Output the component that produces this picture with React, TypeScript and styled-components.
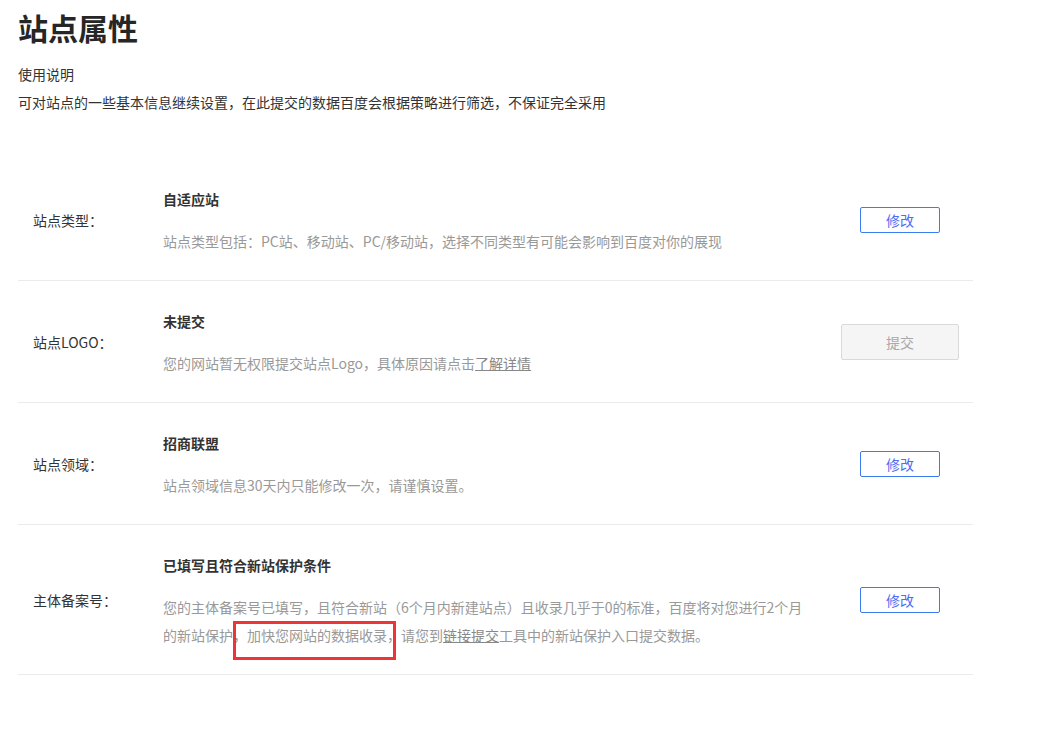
import React from 'react';
import styled, { createGlobalStyle } from 'styled-components';

const GlobalStyle = createGlobalStyle`
  html, body {
    margin: 0;
    padding: 0;
    background: #fff;
  }
  body {
    font-family: "Noto Sans CJK SC", "Liberation Sans", sans-serif;
    color: #333;
  }
`;

const Page = styled.div`
  padding: 7px 18px 40px;
  width: 955px;
`;

const Title = styled.h1`
  margin: 0;
  font-size: 30px;
  line-height: 40px;
  font-weight: bold;
  color: #262626;
`;

const Intro = styled.div`
  margin-top: 13px;
  font-size: 14px;
  line-height: 28px;
  color: #333;
`;

const List = styled.div`
  margin-top: 43px;
`;

const Row = styled.div`
  display: flex;
  align-items: center;
  border-bottom: 1px solid #ebebeb;
`;

const Label = styled.div`
  width: 145px;
  flex-shrink: 0;
  box-sizing: border-box;
  padding-left: 15px;
  font-size: 14px;
  color: #333;
`;

const Body = styled.div`
  flex: 1;
  padding: 28px 0 25px;
`;

const ItemTitle = styled.div`
  font-size: 14px;
  line-height: 24px;
  font-weight: bold;
  color: #333;
`;

const Desc = styled.div`
  margin-top: 16px;
  font-size: 14px;
  line-height: 28px;
  color: #999;
  max-width: 650px;
`;

const Link = styled.a`
  color: #888;
  text-decoration: underline;
  cursor: pointer;
`;

const Highlight = styled.span`
  position: relative;
  &::after {
    content: '';
    position: absolute;
    left: -14px;
    top: -4px;
    width: 163px;
    height: 39px;
    box-sizing: border-box;
    border: 3px solid #ee3535;
    pointer-events: none;
  }
`;

const Action = styled.div`
  width: 146px;
  flex-shrink: 0;
  display: flex;
  justify-content: center;
`;

const Button = styled.button<{ $disabled?: boolean }>`
  font-family: inherit;
  font-size: 14px;
  box-sizing: border-box;
  border-radius: 2px;
  cursor: ${(p) => (p.$disabled ? 'default' : 'pointer')};
  width: ${(p) => (p.$disabled ? '118px' : '80px')};
  height: ${(p) => (p.$disabled ? '36px' : '26px')};
  padding: 0;
  background: ${(p) => (p.$disabled ? '#f5f5f5' : '#fff')};
  border: 1px solid ${(p) => (p.$disabled ? '#d9d9d9' : '#3b7cf2')};
  color: ${(p) => (p.$disabled ? '#a8a8a8' : '#4e6ef2')};
`;

const App: React.FC = () => {
  return (
    <Page>
      <GlobalStyle />
      <Title>站点属性</Title>
      <Intro>
        <div>使用说明</div>
        <div>可对站点的一些基本信息继续设置，在此提交的数据百度会根据策略进行筛选，不保证完全采用</div>
      </Intro>
      <List>
        <Row>
          <Label>站点类型：</Label>
          <Body>
            <ItemTitle>自适应站</ItemTitle>
            <Desc>站点类型包括：PC站、移动站、PC/移动站，选择不同类型有可能会影响到百度对你的展现</Desc>
          </Body>
          <Action>
            <Button>修改</Button>
          </Action>
        </Row>
        <Row>
          <Label>站点LOGO：</Label>
          <Body>
            <ItemTitle>未提交</ItemTitle>
            <Desc>
              您的网站暂无权限提交站点Logo，具体原因请点击<Link>了解详情</Link>
            </Desc>
          </Body>
          <Action>
            <Button $disabled>提交</Button>
          </Action>
        </Row>
        <Row>
          <Label>站点领域：</Label>
          <Body>
            <ItemTitle>招商联盟</ItemTitle>
            <Desc>站点领域信息30天内只能修改一次，请谨慎设置。</Desc>
          </Body>
          <Action>
            <Button>修改</Button>
          </Action>
        </Row>
        <Row>
          <Label>主体备案号：</Label>
          <Body>
            <ItemTitle>已填写且符合新站保护条件</ItemTitle>
            <Desc>
              您的主体备案号已填写，且符合新站（6个月内新建站点）且收录几乎于0的标准，百度将对您进行2个月的新站保护，
              <Highlight>加快您网站的数据收录，</Highlight>请您到<Link>链接提交</Link>工具中的新站保护入口提交数据。
            </Desc>
          </Body>
          <Action>
            <Button>修改</Button>
          </Action>
        </Row>
      </List>
    </Page>
  );
};

export default App;
